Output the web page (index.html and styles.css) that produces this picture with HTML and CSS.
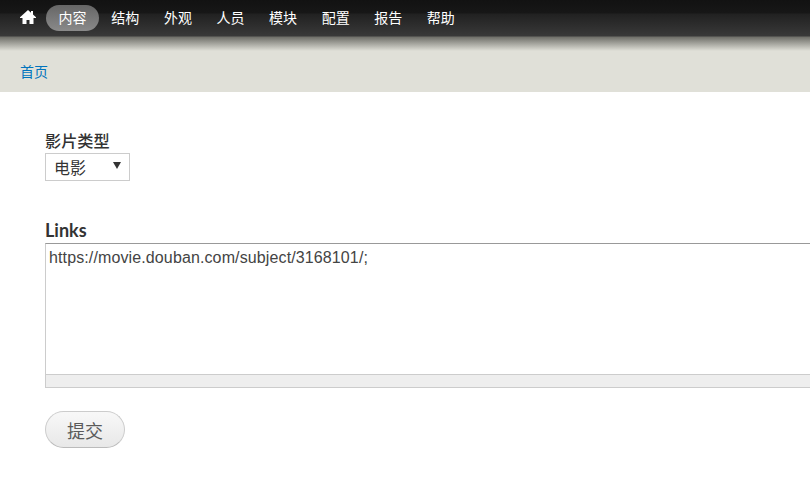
FILE: index.html
```html
<!DOCTYPE html>
<html lang="zh">
<head>
<meta charset="utf-8">
<title>首页</title>
<link rel="stylesheet" href="styles.css">
</head>
<body>
<header class="head">
  <nav class="nav">
    <a class="home" href="#"><svg width="16" height="14" viewBox="0 0 16 14"><path fill="#fff" d="M8 0 L11 2.7 V1 H13 V4.5 L16 7.2 V8 H13.5 V14 H9.5 V10 H6.5 V14 H2.5 V8 H0 V7.2 Z"/></svg></a>
    <a class="tab active" href="#">内容</a>
    <a class="tab" href="#">结构</a>
    <a class="tab" href="#">外观</a>
    <a class="tab" href="#">人员</a>
    <a class="tab" href="#">模块</a>
    <a class="tab" href="#">配置</a>
    <a class="tab" href="#">报告</a>
    <a class="tab" href="#">帮助</a>
  </nav>
  <div class="crumb"><a href="#">首页</a></div>
</header>
<main class="main">
  <form class="form">
    <div class="field type-field">
      <label class="label">影片类型</label>
      <div class="select"><span>电影</span><i class="arrow"></i></div>
    </div>
    <div class="field links-field">
      <label class="label">Links</label>
      <div class="area">
        <div class="area-text">https://movie.douban.com/subject/3168101/;</div>
        <div class="grip"></div>
      </div>
    </div>
    <button class="submit" type="button">提交</button>
  </form>
</main>
</body>
</html>
```
FILE: styles.css
```css
* { box-sizing: border-box; }
html, body { margin: 0; padding: 0; background: #fff; overflow: hidden; height: 100%; }
body { font-family: "Liberation Sans", "Noto Sans CJK SC", sans-serif; color: #333; font-size: 14px; }
a { text-decoration: none; }
.head { height: 92px; background: #e0e0d8; display: flex; flex-direction: column; }
.nav {
  height: 51px; flex: none; display: flex; align-items: flex-start; padding: 5px 0 0 19px;
  background: linear-gradient(#121212 0, #171717 13px, #212121 14px, #393939 36px, #6f6f69 37px, #e0e0d8 51px);
}
.home { width: 27px; height: 26px; display: flex; align-items: center; padding-left: 1px; flex: none; }
.home svg { margin-top: -2px; }
.tab { height: 26px; line-height: 25px; padding: 0 12.3px; color: #fff; font-size: 14px; border-radius: 13px; flex: none; font-family: "Noto Sans CJK SC", sans-serif; }
.tab.active { background: linear-gradient(#666, #8a8a8a); padding: 0 12.5px; }
.crumb { padding: 10px 0 0 20px; font-size: 14px; line-height: 20px; }
.crumb a { color: #0074bd; font-family: "Noto Sans CJK SC", sans-serif; }
.main { padding: 36px 0 0 45px; }
.field { display: block; }
.label { display: block; font-weight: 700; font-size: 18px; line-height: 22px; color: #333; font-family: "Lato", "Noto Sans CJK SC", sans-serif; }
.type-field .label { font-weight: 500; font-size: 16.2px; line-height: 25px; font-family: "Noto Sans CJK SC", sans-serif; }
.select { width: 85px; height: 28px; border: 1px solid #ccc; display: flex; align-items: center; justify-content: space-between; padding: 0 8px; font-size: 16px; font-family: "Noto Sans CJK SC", sans-serif; }
.arrow { width: 0; height: 0; border-left: 4px solid transparent; border-right: 4px solid transparent; border-top: 7px solid #333; margin: -4px 0 0; }
.links-field { margin-top: 38px; }
.area { width: 800px; margin-top: 2px; border: 1px solid #ccc; border-top-color: #999; height: 145px; display: flex; flex-direction: column; }
.area-text { flex: 1; padding: 4px 3px; font-size: 16px; letter-spacing: .12px; line-height: 20px; color: #444; }
.grip { height: 13px; flex: none; background: #eee; border-top: 1px solid #ccc; }
.submit {
  display: block; margin-top: 23px; width: 80px; height: 37px; border-radius: 19px; border: 1px solid #ccc; border-bottom-color: #bbb;
  background: linear-gradient(#f8f8f8, #e8e8e8); color: #5a5a5a; font-size: 18px; padding: 0; font-family: "Noto Sans CJK SC", sans-serif;
}
```
